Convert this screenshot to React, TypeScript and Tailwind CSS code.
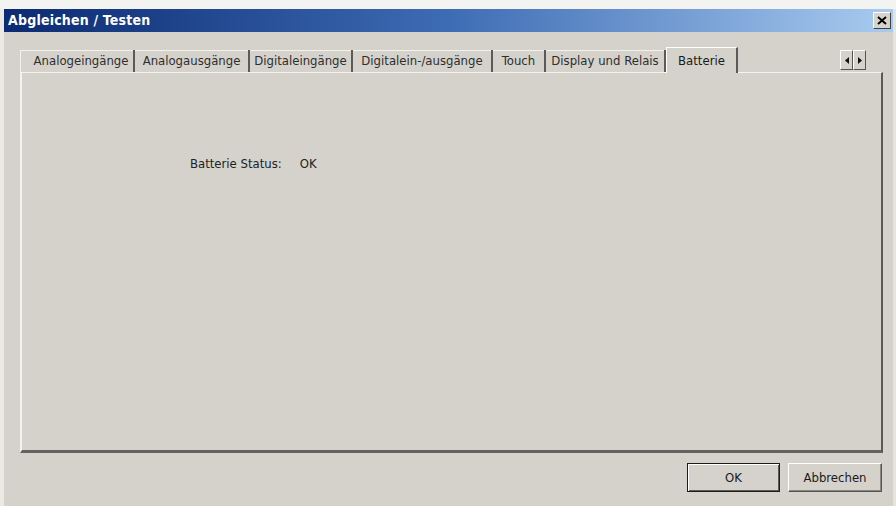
import React from "react";

const tabs = [
  { label: "Analogeingänge", w: 106 },
  { label: "Analogausgänge", w: 115 },
  { label: "Digitaleingänge", w: 103 },
  { label: "Digitalein-/ausgänge", w: 140 },
  { label: "Touch", w: 53 },
  { label: "Display und Relais", w: 120 },
];

export default function App() {
  return (
    <div
      className="w-[896px] h-[506px] bg-[#d5d2cc] flex flex-col text-[#1a1a1a]"
      style={{ fontFamily: "Tahoma, 'DejaVu Sans Condensed', 'Liberation Sans', sans-serif" }}
    >
      <div className="h-[9px] bg-[#f3f3f1]" />
      <div className="flex-1 flex flex-col border-l-[4px] border-l-[#ebe9e4] border-r-[3px] border-r-[#e6e4df]">
        {/* title bar */}
        <div className="h-[23px] flex items-center justify-between pl-[4px] pr-[2px] bg-gradient-to-r from-[#0c2a72] via-[#3e6cb4] to-[#a9cbef]">
          <span className="text-white font-bold text-[14px] tracking-[0.2px]">Abgleichen / Testen</span>
          <div className="w-[18px] h-[17px] bg-[#d6d3cd] border border-t-white border-l-white border-r-[#404040] border-b-[#404040] flex items-center justify-center">
            <svg width="10" height="9" viewBox="0 0 10 9">
              <path d="M1 1 L9 8 M9 1 L1 8" stroke="#000" strokeWidth="2" />
            </svg>
          </div>
        </div>

        {/* tab strip */}
        <div className="mt-[15px] pl-[16px] flex items-end h-[25px] relative">
          <div className="flex items-end h-[22px] pl-[8px] border-t border-t-[#f2f1ee] border-l border-l-[#f2f1ee]">
            {tabs.map((t) => (
              <div
                key={t.label}
                className="h-[22px] flex items-center justify-center text-[13px] border-r-2 border-r-[#5c5a56] text-[#2e2e2e]"
                style={{ width: t.w }}
              >
                {t.label}
              </div>
            ))}
          </div>
          <div className="h-[26px] w-[72px] -mb-[1px] flex items-center justify-center text-[13px] bg-[#d5d2cc] border-t border-t-white border-l border-l-white border-r-2 border-r-[#5c5a56] z-10">
            Batterie
          </div>
          <div className="absolute right-[27px] top-[3px] flex">
            <div className="w-[13px] h-[20px] border border-t-white border-l-white border-r-[#555] border-b-[#555] flex items-center justify-center">
              <svg width="4" height="7" viewBox="0 0 4 7"><path d="M4 0 L0 3.5 L4 7 Z" fill="#111" /></svg>
            </div>
            <div className="w-[13px] h-[20px] border border-t-white border-l-white border-r-[#555] border-b-[#555] flex items-center justify-center">
              <svg width="4" height="7" viewBox="0 0 4 7"><path d="M0 0 L4 3.5 L0 7 Z" fill="#111" /></svg>
            </div>
          </div>
        </div>

        {/* tab page */}
        <div className="ml-[16px] w-[863px] h-[381px] border-l-2 border-l-[#f4f3f0] border-t border-t-[#f4f3f0] border-r-2 border-r-[#5c5a56] border-b-[3px] border-b-[#646260]">
          <div className="flex items-center pt-[81px] pl-[168px] text-[13px] text-[#222]">
            <span>Batterie Status:</span>
            <span className="ml-[18px]">OK</span>
          </div>
        </div>

        {/* buttons */}
        <div className="flex justify-end gap-[8px] mt-[10px] pr-[11px]">
          <button className="w-[93px] h-[29px] border border-[#1c1c1c] bg-[#d5d2cc] text-[13px] shadow-[inset_1px_1px_0_#fff,inset_-1px_-1px_0_#5e5c58]">
            OK
          </button>
          <button className="w-[94px] h-[29px] bg-[#d5d2cc] text-[13px] border border-t-white border-l-white border-r-[#555] border-b-[#555] shadow-[inset_-1px_-1px_0_#8a8782]">
            Abbrechen
          </button>
        </div>
      </div>
    </div>
  );
}
